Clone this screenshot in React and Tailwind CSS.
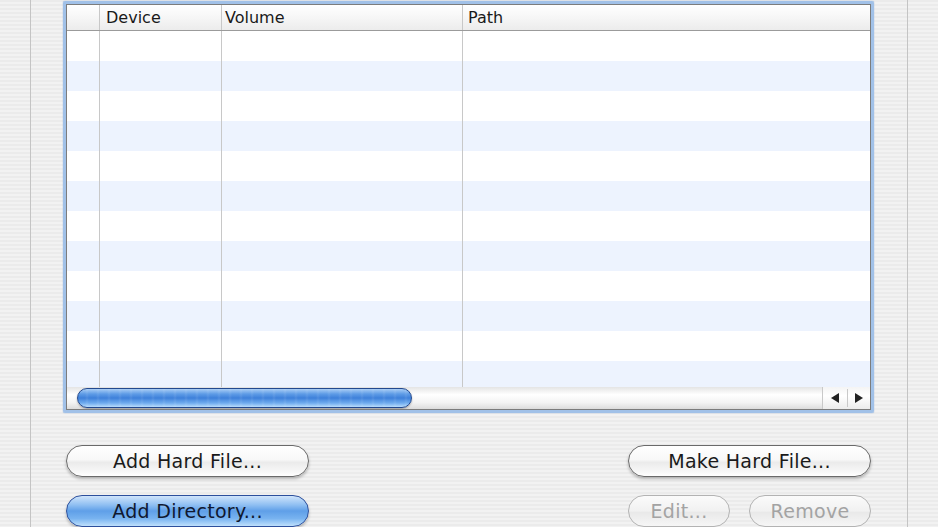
const stripes =
  "bg-[repeating-linear-gradient(180deg,#ebebeb_0px,#ebebeb_2px,#f2f2f2_2px,#f2f2f2_4px)]";

const rows = Array.from({ length: 12 });

function AquaButton({ children, width, variant = "normal" }) {
  const base =
    "h-[32px] rounded-full flex items-center justify-center text-[19px] font-['DejaVu_Sans',sans-serif] tracking-[0.3px]";
  if (variant === "default") {
    return (
      <div
        className={`${base} border border-[#2c4f9c] text-[#101830] shadow-[0_2px_3px_rgba(0,0,0,0.25)] bg-[linear-gradient(180deg,#cfe4fb_0%,#8fbff2_30%,#5f9fe8_50%,#78b3f0_75%,#bfe0fc_100%)]`}
        style={{ width }}
      >
        {children}
      </div>
    );
  }
  if (variant === "disabled") {
    return (
      <div
        className={`${base} border border-[#b3b3b3] text-[#a3a3a3] bg-[linear-gradient(180deg,#fbfbfb_0%,#f1f1f1_50%,#e9e9e9_55%,#f6f6f6_100%)]`}
        style={{ width }}
      >
        {children}
      </div>
    );
  }
  return (
    <div
      className={`${base} border border-[#6a6a6a] text-[#1a1a1a] shadow-[0_2px_3px_rgba(0,0,0,0.25)] bg-[linear-gradient(180deg,#ffffff_0%,#f8f8f8_45%,#ebebeb_55%,#f7f7f7_85%,#ffffff_100%)]`}
      style={{ width }}
    >
      {children}
    </div>
  );
}

export default function App() {
  return (
    <div className="w-[938px] h-[527px] overflow-hidden flex font-['DejaVu_Sans',sans-serif]">
      <div className={`w-[30px] h-full ${stripes}`} />
      <div className="w-[1px] h-full bg-[#c4c4c4]" />
      <div className={`w-[876px] h-full ${stripes} flex flex-col pl-[32px]`}>
        {/* table with focus ring */}
        <div className="mt-[1px] w-[811px] h-[412px] border-[3px] border-[#a1c1e8] rounded-[2px] shadow-[0_0_1px_#5c87c4]">
          <div className="w-full h-full border border-[#7c7c7c] bg-white flex flex-col overflow-hidden">
            {/* header */}
            <div className="h-[26px] shrink-0 flex border-b border-[#9b9b9b] bg-[linear-gradient(180deg,#ffffff_0%,#f6f6f6_50%,#ececec_100%)] text-[16px] text-[#1a1a1a]">
              <div className="w-[33px] border-r border-[#c8c8c8]" />
              <div className="w-[122px] border-r border-[#c8c8c8] pl-[6px] leading-[26px]">Device</div>
              <div className="w-[241px] border-r border-[#c8c8c8] pl-[3px] leading-[26px]">Volume</div>
              <div className="flex-1 pl-[5px] leading-[26px]">Path</div>
            </div>
            {/* body */}
            <div className="relative flex-1 overflow-hidden">
              <div className="flex flex-col">
                {rows.map((_, i) => (
                  <div
                    key={i}
                    className={`h-[30px] shrink-0 ${i % 2 === 1 ? "bg-[#edf3fe]" : "bg-white"}`}
                  />
                ))}
              </div>
              <div className="absolute inset-0 flex pointer-events-none">
                <div className="w-[33px] border-r border-[#c8c8c8]" />
                <div className="w-[122px] border-r border-[#c8c8c8]" />
                <div className="w-[241px] border-r border-[#c8c8c8]" />
              </div>
            </div>
            {/* horizontal scrollbar */}
            <div className="h-[22px] shrink-0 flex bg-[linear-gradient(180deg,#e4e4e4_0%,#ffffff_35%,#f4f4f4_70%,#dcdcdc_100%)]">
              <div className="flex-1 relative">
                <div className="absolute left-[10px] top-[1px] w-[335px] h-[20px] rounded-full border border-[#23498f] bg-[linear-gradient(180deg,#a9cdf5_0%,#5d9be6_28%,#3e80da_50%,#6fabee_78%,#b8dcfc_100%)] shadow-[0_1px_2px_rgba(0,0,0,0.3)]">
                  <div className="w-full h-full rounded-full bg-[repeating-linear-gradient(90deg,rgba(255,255,255,0)_0px,rgba(255,255,255,0)_7px,rgba(255,255,255,0.08)_9px,rgba(255,255,255,0)_11px)]" />
                </div>
              </div>
              <div className="w-[48px] flex items-center border-l border-[#c9c9c9] bg-[linear-gradient(180deg,#f4f4f4_0%,#ffffff_40%,#ececec_100%)]">
                <div className="w-[24px] flex justify-center">
                  <div className="w-0 h-0 border-y-[5px] border-y-transparent border-r-[8px] border-r-[#222]" />
                </div>
                <div className="w-[1px] h-[18px] bg-[#c9c9c9]" />
                <div className="flex-1 flex justify-center">
                  <div className="w-0 h-0 border-y-[5px] border-y-transparent border-l-[8px] border-l-[#222]" />
                </div>
              </div>
            </div>
          </div>
        </div>

        {/* buttons */}
        <div className="mt-[32px] flex justify-between w-[808px] pl-[3px]">
          <AquaButton width={243}>Add Hard File...</AquaButton>
          <AquaButton width={243}>Make Hard File...</AquaButton>
        </div>
        <div className="mt-[18px] flex justify-between w-[808px] pl-[3px]">
          <AquaButton width={243} variant="default">Add Directory...</AquaButton>
          <div className="flex gap-[19px]">
            <AquaButton width={102} variant="disabled">Edit...</AquaButton>
            <AquaButton width={122} variant="disabled">Remove</AquaButton>
          </div>
        </div>
      </div>
      <div className="w-[1px] h-full bg-[#c4c4c4]" />
      <div className={`flex-1 h-full ${stripes}`} />
    </div>
  );
}
